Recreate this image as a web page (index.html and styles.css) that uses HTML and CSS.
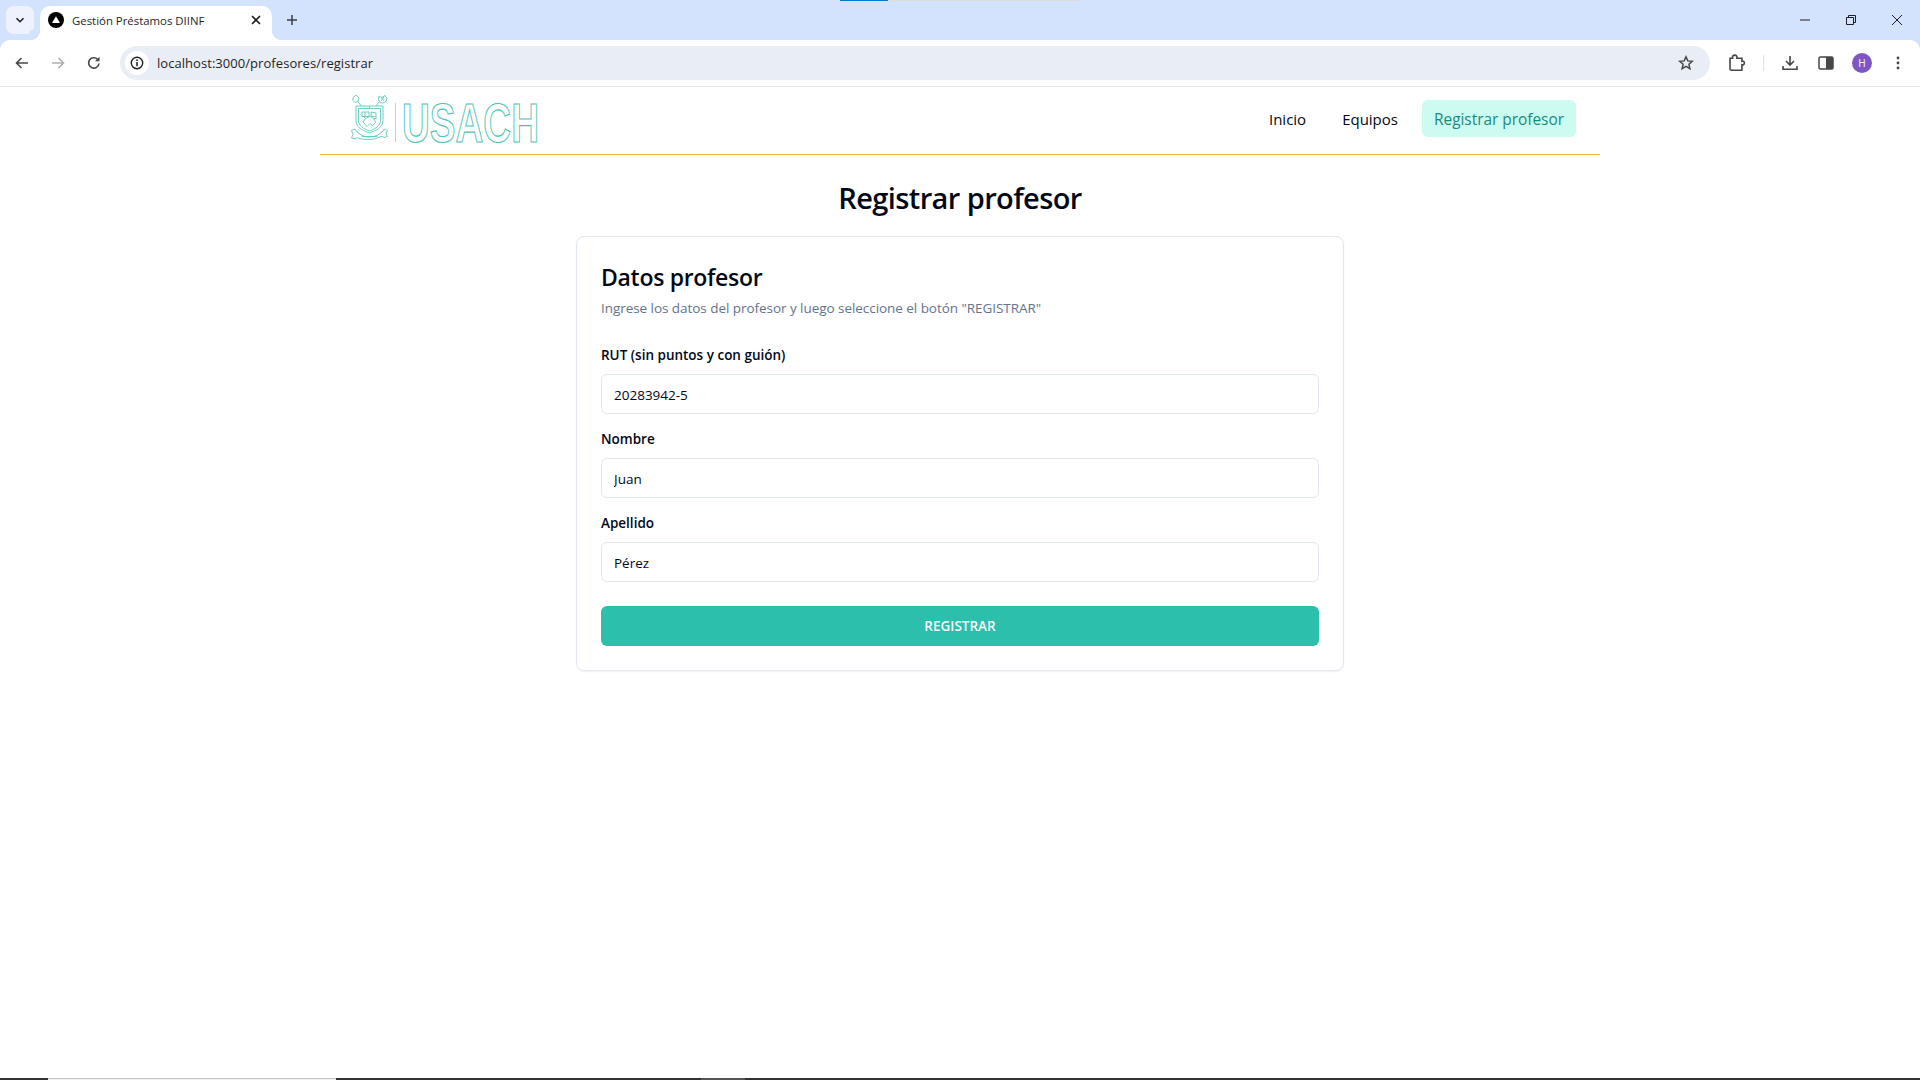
FILE: index.html
```html
<!DOCTYPE html>
<html lang="es">
<head>
    <meta charset="UTF-8">
    <title>Gestión Préstamos DIINF</title>
    <link rel="stylesheet" href="styles.css">
</head>
<body>
    <div class="browser-top">
        <div class="load-bar"><span class="load-bar-done"></span><span class="load-bar-rest"></span></div>
        <div class="tab-strip">
            <div class="tab-search">
                <svg width="12" height="12" viewBox="0 0 12 12"><path d="M2.500 4.200 6 7.700l3.500-3.500" fill="none" stroke="#1f1f1f" stroke-width="1.600"/></svg>
            </div>
            <div class="tab">
                <svg class="tab-favicon" width="16" height="16" viewBox="0 0 16 16"><circle cx="8" cy="8" r="8" fill="#000"/><path d="M8 4.200 12 11H4z" fill="#fff"/></svg>
                <span class="tab-title">Gestión Préstamos DIINF</span>
                <svg class="tab-close" width="12" height="12" viewBox="0 0 12 12"><path d="M2 2l8 8M10 2l-8 8" stroke="#1f1f1f" stroke-width="1.600"/></svg>
            </div>
            <svg class="new-tab" width="14" height="14" viewBox="0 0 14 14"><path d="M7 2v10M2 7h10" stroke="#3c3f44" stroke-width="1.500"/></svg>
            <div class="window-buttons">
                <svg width="12" height="12" viewBox="0 0 12 12"><path d="M1 6h10" stroke="#1f1f1f" stroke-width="1"/></svg>
                <svg width="12" height="12" viewBox="0 0 12 12"><path d="M1.500 3.500h7v7h-7zM3.500 3.500v-2h7v7h-2" fill="none" stroke="#1f1f1f" stroke-width="1"/></svg>
                <svg width="12" height="12" viewBox="0 0 12 12"><path d="M1 1l10 10M11 1 1 11" stroke="#1f1f1f" stroke-width="1"/></svg>
            </div>
        </div>
        <div class="toolbar">
            <svg class="nav-icon" width="16" height="16" viewBox="0 0 16 16"><path d="M14 8H3M7.500 3 2.500 8l5 5" fill="none" stroke="#474747" stroke-width="1.600"/></svg>
            <svg class="nav-icon" width="16" height="16" viewBox="0 0 16 16"><path d="M2 8h11M8.500 3l5 5-5 5" fill="none" stroke="#b0b0b0" stroke-width="1.600"/></svg>
            <svg class="nav-icon" width="16" height="16" viewBox="0 0 16 16"><path d="M13 8.500A5.200 5.200 0 1 1 11.600 4.300" fill="none" stroke="#474747" stroke-width="1.600"/><path d="M13.500 1.800v4.400H9.100z" fill="#474747"/></svg>
            <div class="omnibox">
                <div class="site-info">
                    <svg width="14" height="14" viewBox="0 0 14 14"><circle cx="7" cy="7" r="5.700" fill="none" stroke="#1f1f1f" stroke-width="1.400"/><path d="M7 6v4.200" stroke="#1f1f1f" stroke-width="1.500"/><circle cx="7" cy="4.200" r=".9" fill="#1f1f1f"/></svg>
                </div>
                <span class="url">localhost:3000/profesores/registrar</span>
                <svg class="star" width="16" height="16" viewBox="0 0 16 16"><path d="M8 1.800l1.800 4.100 4.500.4-3.400 3 1 4.400L8 11.400l-3.900 2.300 1-4.400-3.400-3 4.500-.4z" fill="none" stroke="#474747" stroke-width="1.500"/></svg>
            </div>
            <div class="toolbar-actions">
                <svg class="ext" width="18" height="18" viewBox="0 0 18 18"><path d="M2 4.200h2.600a2.300 2.300 0 1 1 4.300 0h5v3a1.900 1.900 0 1 1 0 3.600v5.400H3.500A1.500 1.500 0 0 1 2 14.700z" fill="none" stroke="#474747" stroke-width="1.600"/></svg>
                <span class="toolbar-sep"></span>
                <svg class="download" width="16" height="16" viewBox="0 0 16 16"><path d="M8 1v8.500M4 6l4 4 4-4M1 11v3.300h14V11" fill="none" stroke="#474747" stroke-width="1.600"/></svg>
                <svg class="side" width="16" height="16" viewBox="0 0 16 16"><rect x="1" y="2" width="14" height="12" rx="1.500" fill="none" stroke="#474747" stroke-width="1.500"/><rect x="8" y="2" width="7" height="12" fill="#474747"/></svg>
                <span class="avatar">H</span>
                <svg class="menu" width="4" height="14" viewBox="0 0 4 14"><circle cx="2" cy="2" r="1.400" fill="#474747"/><circle cx="2" cy="7" r="1.400" fill="#474747"/><circle cx="2" cy="12" r="1.400" fill="#474747"/></svg>
            </div>
        </div>
    </div>

    <div class="page">
        <nav class="navbar">
            <a class="logo" href="#">
                <svg class="crest" width="40" height="48" viewBox="0 0 40 48">
                    <g fill="none" stroke="#5cc9ba" stroke-width=".9">
                        <!-- mace and flower above the shield -->
                        <path d="M3 3.500 6 1l3 3-1 3.500-3 1-2-2zM8 8l3.500 4"/>
                        <path d="M29 2l3 1.500L35 1.500l2 3-1 3-3 1.500-3-.5-1.500-3zM29 8l-3 4M31 3l3 4M34 3l-3 4"/>
                        <!-- shield -->
                        <path d="M6 12h27v14.500c0 7-7 10-13.500 12.500C13 36.500 6 33.500 6 26.500z"/>
                        <path d="M8.500 14.500h22v12c0 5.500-5.500 8.500-11 10.500-5.500-2-11-5-11-10.500z"/>
                        <path d="M12 18h7v4.500h-7zM21 18l5 1v4l-5-1zM15 18v4.500M13 28l3-4 4-1.500 4 2 1.500 4-3 3-2.500-2-3 3z"/>
                        <path d="M19.500 12v2.500M15 24l-2-2M24 25l3-1"/>
                        <!-- ribbon -->
                        <path d="M1.500 36.500 5 35l2 3c4 3.500 8 5 12.500 5s8.500-1.500 12.500-5l2-3 3.500 1.500-1.500 3 1.500 3-3.500 1-2-1.500c-4 2-8 3.500-12.500 3.500S11 45.500 7 43.500L5 45l-3.500-1 1.500-3.500z"/>
                        <path d="M12 42.500h15"/>
                    </g>
                </svg>
                <span class="logo-sep"></span>
                <svg class="wordmark" width="210" height="64" viewBox="0 0 210 64">
                    <text x="2" y="50" textLength="137" lengthAdjust="spacingAndGlyphs">USACH</text>
                </svg>
            </a>
            <ul class="nav-links">
                <li><a href="#">Inicio</a></li>
                <li><a href="#">Equipos</a></li>
                <li><a class="active" href="#">Registrar profesor</a></li>
            </ul>
        </nav>

        <main class="content">
            <h1>Registrar profesor</h1>
            <section class="card">
                <h2>Datos profesor</h2>
                <p class="card-desc">Ingrese los datos del profesor y luego seleccione el botón "REGISTRAR"</p>
                <form class="form">
                    <div class="field">
                        <label for="rut">RUT (sin puntos y con guión)</label>
                        <input id="rut" type="text" value="20283942-5">
                    </div>
                    <div class="field">
                        <label for="nombre">Nombre</label>
                        <input id="nombre" type="text" value="Juan">
                    </div>
                    <div class="field">
                        <label for="apellido">Apellido</label>
                        <input id="apellido" type="text" value="Pérez">
                    </div>
                    <button type="button">REGISTRAR</button>
                </form>
            </section>
        </main>
    </div>

    <div class="bottom-strip">
        <span class="strip-light"></span>
        <span class="strip-gray"></span>
    </div>
</body>
</html>
```

FILE: styles.css
```css
* {
    box-sizing: border-box;
}

body {
    margin: 0;
    height: 100vh;
    display: flex;
    flex-direction: column;
    overflow: hidden;
    font-family: "Open Sans", "Noto Sans", sans-serif;
    color: #020817;
    background: #fff;
}

/* browser chrome */
.browser-top {
    background: #d3e3fd;
}

.load-bar {
    display: flex;
    height: 1px;
    padding-left: 840px;
}

.load-bar-done {
    width: 48px;
    background: #0078d4;
}

.load-bar-rest {
    width: 192px;
    background: #dcdcdc;
}

.tab-strip {
    display: flex;
    align-items: flex-start;
    height: 39px;
    padding-left: 6px;
}

.tab-search {
    width: 28px;
    height: 28px;
    margin-top: 5px;
    border-radius: 8px;
    background: #edf2fc;
    display: flex;
    align-items: center;
    justify-content: center;
}

.tab {
    position: relative;
    width: 232px;
    height: 34px;
    margin: 5px 0 0 6px;
    padding: 0 10px 6px 8px;
    background: #fff;
    border-radius: 10px 10px 0 0;
    display: flex;
    align-items: center;
}

/* concave corners at the foot of the tab */
.tab::before,
.tab::after {
    content: "";
    position: absolute;
    bottom: 0;
    width: 10px;
    height: 10px;
}

.tab::before {
    left: -10px;
    background: radial-gradient(circle at 0 0, #d3e3fd 10px, #fff 10.5px);
}

.tab::after {
    right: -10px;
    background: radial-gradient(circle at 100% 0, #d3e3fd 10px, #fff 10.5px);
}

.tab-title {
    flex: 1;
    margin-left: 8px;
    font-size: 11.4px;
    color: #1f1f1f;
}

.new-tab {
    margin: 12px 0 0 13px;
}

.window-buttons {
    margin-left: auto;
    display: flex;
    gap: 34px;
    padding: 13px 17px 0 0;
}

.toolbar {
    position: relative;
    height: 47px;
    background: #fff;
    border-radius: 10px 10px 0 0;
    border-bottom: 1px solid #e3e3e3;
    display: flex;
    align-items: center;
    padding-left: 14px;
}

.nav-icon {
    margin-right: 20px;
}

.nav-icon:nth-child(3) {
    margin-right: 18px;
}

.omnibox {
    width: 1590px;
    height: 34px;
    padding: 0 16px 0 5px;
    border-radius: 17px;
    background: #e9eef6;
    display: flex;
    align-items: center;
}

.site-info {
    width: 24px;
    height: 24px;
    border-radius: 50%;
    background: #fff;
    display: flex;
    align-items: center;
    justify-content: center;
}

.url {
    flex: 1;
    margin-left: 8px;
    font-size: 13px;
    letter-spacing: 0.05px;
    color: #1f1f1f;
}

.toolbar-actions {
    flex: 1;
    display: flex;
    align-items: center;
}

.ext {
    margin-left: 18px;
}

.toolbar-sep {
    width: 1px;
    height: 16px;
    margin: 0 18px 0 17px;
    background: #d3e3fd;
}

.side {
    margin-left: 20px;
}

.avatar {
    width: 20px;
    height: 20px;
    margin-left: 18px;
    border-radius: 50%;
    background: #7e57c2;
    color: #fff;
    font-size: 10px;
    line-height: 20px;
    text-align: center;
}

.menu {
    margin-left: 24px;
}

/* page */
.page {
    flex: 1;
    width: 1280px;
    margin: 0 auto;
}

.navbar {
    height: 68px;
    border-bottom: 1px solid #eeb73f;
    display: flex;
    align-items: flex-start;
    justify-content: space-between;
    padding: 0 24px 0 30px;
}

.logo {
    display: flex;
    align-items: flex-start;
    padding-top: 7px;
    text-decoration: none;
}

.logo-sep {
    width: 1px;
    height: 39px;
    margin: 9px 4px 0 5px;
    background: #f2c39c;
}

.wordmark {
    margin-top: -2px;
}

.wordmark text {
    font-family: "Liberation Sans", sans-serif;
    font-size: 55px;
    font-weight: 700;
    fill: #fff;
    stroke: #4fc4b4;
    stroke-width: 1.2;
}

.nav-links {
    list-style: none;
    margin: 13px 0 0;
    padding: 0;
    display: flex;
    gap: 12px;
}

.nav-links a {
    display: block;
    height: 37px;
    padding: 0 12px;
    border-radius: 6px;
    font-size: 15px;
    line-height: 39px;
    color: #020817;
    text-decoration: none;
}

.nav-links a.active {
    background: #ccfbf1;
    color: #1a8a7d;
    font-size: 15.4px;
    font-weight: 500;
}

.content {
    display: flex;
    flex-direction: column;
    align-items: center;
}

h1 {
    margin: 25px 0 20px;
    font-size: 29px;
    line-height: 36px;
    letter-spacing: -0.6px;
    font-weight: 600;
}

.card {
    width: 768px;
    padding: 24px;
    border: 1px solid #e2e8f0;
    border-radius: 8px;
    box-shadow: 0 1px 2px rgba(0, 0, 0, 0.05);
}

h2 {
    margin: 0;
    font-size: 23px;
    line-height: 32px;
    letter-spacing: -0.3px;
    font-weight: 600;
}

.card-desc {
    margin: 5px 0 28px;
    font-size: 13.5px;
    line-height: 20px;
    letter-spacing: -0.05px;
    color: #64748b;
}

.field {
    display: flex;
    flex-direction: column;
    gap: 8px;
    margin-bottom: 16px;
}

.field label {
    height: 20px;
    font-size: 13.5px;
    line-height: 18px;
    font-weight: 600;
}

.field input {
    height: 40px;
    padding: 2px 12px 0;
    border: 1px solid #e2e8f0;
    border-radius: 6px;
    font: inherit;
    font-size: 13.5px;
    color: #020817;
}

button {
    display: block;
    width: 100%;
    height: 40px;
    margin-top: 24px;
    border: none;
    border-radius: 6px;
    background: #2bbfac;
    color: #f8fafc;
    font: inherit;
    font-size: 13.5px;
    font-weight: 600;
}

.form .field:last-of-type {
    margin-bottom: 0;
}

/* screen edge */
.bottom-strip {
    position: relative;
    height: 2px;
    background: #333;
}

.strip-light {
    position: absolute;
    left: 48px;
    width: 288px;
    height: 2px;
    border-top: 1px solid #c4c4c4;
    background: #f0f0f0;
}

.strip-gray {
    position: absolute;
    left: 701px;
    width: 44px;
    height: 2px;
    background: #555;
}
```
